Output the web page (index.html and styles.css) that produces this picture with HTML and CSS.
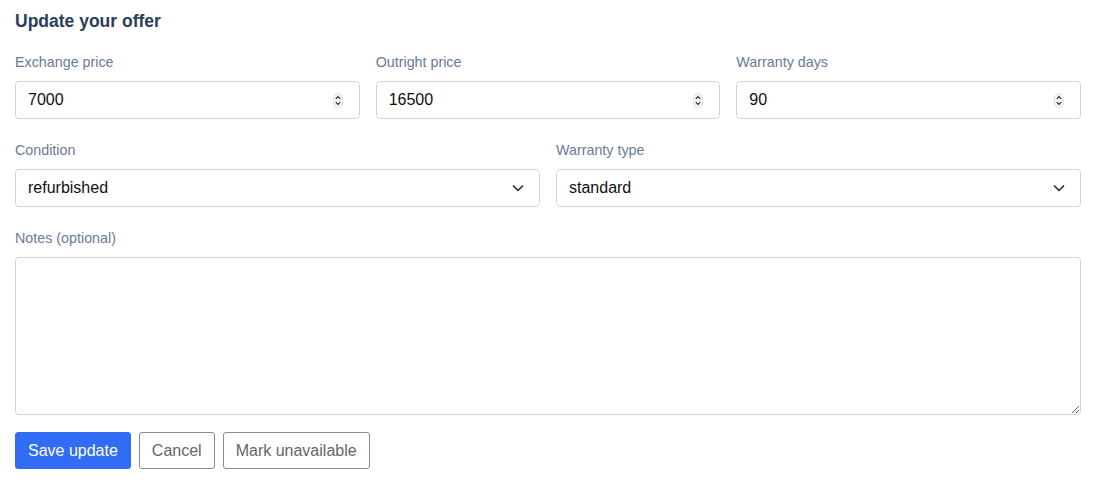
FILE: index.html
```html
<!DOCTYPE html>
<html lang="en">
<head>
<meta charset="utf-8">
<title>Update your offer</title>
<link rel="stylesheet" href="styles.css">
</head>
<body>
<form class="offer">
  <h2 class="title">Update your offer</h2>
  <div class="row row-3">
    <div class="field">
      <label class="label">Exchange price</label>
      <div class="control">
        <span class="value">7000</span>
        <svg class="spin" width="10" height="15" viewBox="0 0 10 15"><rect x="0.5" y="0.5" width="9" height="14" rx="4.5" fill="#f3f4f6" stroke="#e0e2e6"/><path d="M2.8 5.8 L5 3.6 L7.2 5.8" fill="none" stroke="#2a2a2a" stroke-width="1.2"/><path d="M2.8 9.2 L5 11.4 L7.2 9.2" fill="none" stroke="#2a2a2a" stroke-width="1.2"/></svg>
      </div>
    </div>
    <div class="field">
      <label class="label">Outright price</label>
      <div class="control">
        <span class="value">16500</span>
        <svg class="spin" width="10" height="15" viewBox="0 0 10 15"><rect x="0.5" y="0.5" width="9" height="14" rx="4.5" fill="#f3f4f6" stroke="#e0e2e6"/><path d="M2.8 5.8 L5 3.6 L7.2 5.8" fill="none" stroke="#2a2a2a" stroke-width="1.2"/><path d="M2.8 9.2 L5 11.4 L7.2 9.2" fill="none" stroke="#2a2a2a" stroke-width="1.2"/></svg>
      </div>
    </div>
    <div class="field">
      <label class="label">Warranty days</label>
      <div class="control">
        <span class="value">90</span>
        <svg class="spin" width="10" height="15" viewBox="0 0 10 15"><rect x="0.5" y="0.5" width="9" height="14" rx="4.5" fill="#f3f4f6" stroke="#e0e2e6"/><path d="M2.8 5.8 L5 3.6 L7.2 5.8" fill="none" stroke="#2a2a2a" stroke-width="1.2"/><path d="M2.8 9.2 L5 11.4 L7.2 9.2" fill="none" stroke="#2a2a2a" stroke-width="1.2"/></svg>
      </div>
    </div>
  </div>
  <div class="row row-2">
    <div class="field">
      <label class="label">Condition</label>
      <div class="control">
        <span class="value">refurbished</span>
        <svg class="chev" width="12" height="8" viewBox="0 0 12 8"><path d="M1 1.5 L6 6.5 L11 1.5" fill="none" stroke="#222" stroke-width="1.5"/></svg>
      </div>
    </div>
    <div class="field">
      <label class="label">Warranty type</label>
      <div class="control">
        <span class="value">standard</span>
        <svg class="chev" width="12" height="8" viewBox="0 0 12 8"><path d="M1 1.5 L6 6.5 L11 1.5" fill="none" stroke="#222" stroke-width="1.5"/></svg>
      </div>
    </div>
  </div>
  <div class="field notes">
    <label class="label">Notes (optional)</label>
    <textarea class="textarea"></textarea>
  </div>
  <div class="actions">
    <button type="button" class="btn btn-primary">Save update</button>
    <button type="button" class="btn btn-outline">Cancel</button>
    <button type="button" class="btn btn-outline">Mark unavailable</button>
  </div>
</form>
</body>
</html>
```
FILE: styles.css
```css
* { box-sizing: border-box; }
html, body { margin: 0; padding: 0; background: #fff; }
body {
  font-family: "Liberation Sans", Arial, sans-serif;
  color: #111;
}
.offer {
  padding: 9px 20px 0 15px;
  display: flex;
  flex-direction: column;
}
.title {
  margin: 0;
  font-size: 17.5px;
  line-height: 24px;
  font-weight: 700;
  color: #2c3d5b;
}
.row {
  display: grid;
  gap: 16px;
  margin-top: 19px;
}
.row-3 { grid-template-columns: 1fr 1fr 1fr; }
.row-2 { grid-template-columns: 1fr 1fr; margin-top: 21px; }
.field { display: flex; flex-direction: column; }
.notes { margin-top: 21px; }
.label {
  font-size: 14.3px;
  line-height: 20px;
  color: #6b7a98;
  margin-bottom: 9px;
}
.control {
  height: 38px;
  border: 1px solid #d3d6dc;
  border-radius: 4px;
  display: flex;
  align-items: center;
  padding: 0 12px 0 12px;
  background: #fff;
}
.value {
  flex: 1;
  font-size: 16px;
  color: #111;
}
.spin { display: block; margin-right: 4px; }
.chev { display: block; margin-right: 3px; }
.textarea {
  height: 158px;
  border: 1px solid #d3d6dc;
  border-radius: 4px;
  resize: vertical;
  font-family: inherit;
  font-size: 16px;
  padding: 8px 12px;
}
.actions {
  display: flex;
  gap: 8px;
  margin-top: 17px;
}
.btn {
  height: 37px;
  font-family: inherit;
  font-size: 16px;
  border-radius: 3px;
  padding: 0 12px;
  cursor: pointer;
}
.btn-primary {
  background: #316df4;
  border: 1px solid #316df4;
  color: #fff;
}
.btn-outline {
  background: #fff;
  border: 1px solid #8a8a8a;
  color: #666;
}
```
